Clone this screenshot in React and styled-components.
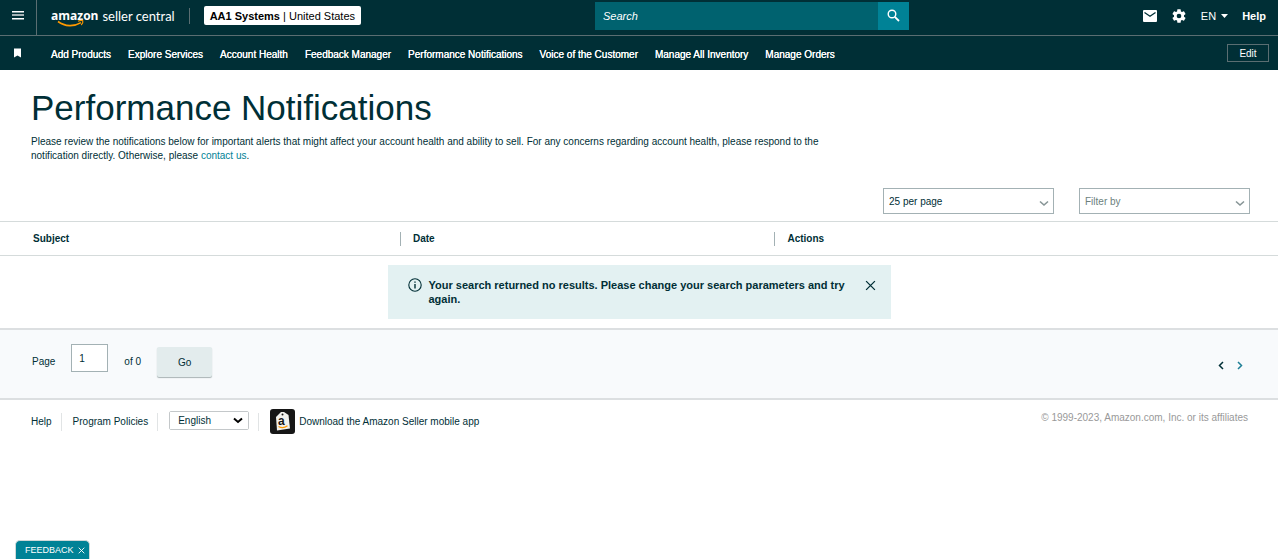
import React, { useState } from "react";
import styled, { createGlobalStyle } from "styled-components";

const GlobalStyle = createGlobalStyle`
  * {
    box-sizing: border-box;
  }
  body {
    margin: 0;
    background: #fff;
    color: #002f36;
    font-family: "Liberation Sans", Arial, sans-serif;
    font-size: 10px;
    line-height: 14px;
  }
  button, input, select {
    font-family: inherit;
    font-size: inherit;
    color: inherit;
  }
  a {
    color: inherit;
    text-decoration: none;
  }
`;

const Header = styled.header`
  background: #002f36;
  color: #fff;
`;

const TopBar = styled.div`
  display: flex;
  height: 36px;
  border-bottom: 1px solid #5a6e72;
`;

const IconButton = styled.button`
  display: flex;
  align-items: center;
  justify-content: center;
  padding: 0;
  border: 0;
  background: none;
  cursor: pointer;
`;

const MenuButton = styled(IconButton)`
  width: 37px;
  padding-bottom: 4px;
  border-right: 1px solid #5a6e72;
`;

const TopContent = styled.div`
  flex: 1;
  display: flex;
  align-items: center;
  justify-content: space-between;
  padding: 0 12px 4px 14px;
`;

const Brand = styled.div`
  display: flex;
  align-items: center;
`;

const Logo = styled.a`
  position: relative;
  display: flex;
  align-items: center;
  gap: 4px;
  height: 16px;
  padding-right: 14px;
  border-right: 1px solid #5a6e72;
  white-space: nowrap;
`;

const LogoName = styled.span`
  font-family: "Open Sans", sans-serif;
  font-size: 12px;
  font-weight: 700;
`;

const LogoProduct = styled.span`
  font-family: Lato, sans-serif;
  font-size: 13px;
`;

const Smile = styled.svg`
  position: absolute;
  left: 6px;
  top: 11px;
`;

const Account = styled.button`
  height: 19px;
  margin-left: 14px;
  padding: 0 6px;
  border: 0;
  border-radius: 2px;
  background: #fff;
  color: #000;
  font-size: 11px;
  white-space: nowrap;
`;

const SearchForm = styled.form`
  display: flex;
  width: 314px;
  height: 28px;
`;

const SearchInput = styled.input`
  flex: 1;
  min-width: 0;
  padding: 0 8px;
  border: 0;
  background: #00626f;
  color: #fff;
  font-size: 11px;
  &::placeholder {
    color: #fff;
    font-style: italic;
    opacity: 1;
  }
`;

const SearchButton = styled(IconButton)`
  width: 31px;
  background: #008296;
`;

const Tools = styled.div`
  display: flex;
  align-items: center;
  gap: 14px;
  font-size: 11px;
`;

const LanguageButton = styled(IconButton)`
  gap: 5px;
  color: #fff;
`;

const HelpLink = styled.a`
  font-weight: 700;
`;

const NavBar = styled.nav`
  display: flex;
  align-items: center;
  height: 34px;
  padding: 0 9px 0 13px;
  color: #fff;
`;

const NavLinks = styled.div`
  flex: 1;
  display: flex;
  gap: 17px;
  margin-left: 29px;
  padding-top: 4px;
  white-space: nowrap;
  text-shadow: 0 0 0 #fff;
`;

const EditButton = styled.button`
  width: 42px;
  height: 18px;
  padding: 0;
  border: 1px solid #5a6e72;
  background: none;
  color: #fff;
`;

const Intro = styled.section`
  padding: 16px 31px 0;
`;

const Title = styled.h1`
  margin: 0;
  font-size: 35px;
  font-weight: 400;
  line-height: 44px;
`;

const Lead = styled.p`
  max-width: 825px;
  margin: 5px 0 0;
`;

const Link = styled.a`
  color: #008296;
`;

const Filters = styled.div`
  display: flex;
  justify-content: flex-end;
  gap: 25px;
  padding: 25px 28px 7px;
`;

const SelectBox = styled.div`
  display: grid;
  align-items: center;
  width: 171px;
  height: 26px;
  border: 1px solid #a3b1b4;
  & > * {
    grid-area: 1 / 1;
  }
  svg {
    justify-self: end;
    margin: 4px 4px 0 0;
    pointer-events: none;
  }
`;

const Select = styled.select`
  appearance: none;
  width: 100%;
  height: 100%;
  padding: 0 5px;
  border: 0;
  background: #fff;
  color: ${(props) => (props.$muted ? "#6c7f7d" : "#002f36")};
`;

const Table = styled.table`
  width: 100%;
  table-layout: fixed;
  border-collapse: collapse;
  border-top: 1px solid #d5dbdb;
`;

const HeadCell = styled.th`
  width: ${(props) => props.$width};
  height: 34px;
  padding: 0;
  border-bottom: 1px solid #d5dbdb;
  text-align: left;
`;

const HeadLabel = styled.div`
  padding-left: ${(props) => (props.$first ? "33px" : "12px")};
  border-left: ${(props) => (props.$first ? "0" : "1px solid #a3b1b4")};
`;

const EmptyCell = styled.td`
  padding: 9px 0;
`;

const Alert = styled.div`
  display: flex;
  align-items: flex-start;
  width: 503px;
  max-width: 100%;
  min-height: 54px;
  margin: 0 auto;
  padding: 13px 15px 13px 20px;
  background: #e3f1f2;
  font-size: 11px;
  font-weight: 700;
`;

const AlertText = styled.div`
  flex: 1;
  padding: 0 12px 0 7px;
`;

const CloseButton = styled(IconButton)`
  height: 14px;
`;

const Pager = styled.form`
  display: flex;
  align-items: center;
  height: 72px;
  padding: 0 35px 4px 32px;
  border-top: 2px solid #dcdfe1;
  border-bottom: 2px solid #dcdfe1;
  background: #f8fafc;
`;

const PageInput = styled.input`
  width: 37px;
  height: 28px;
  margin: 0 16px;
  margin-bottom: 8px;
  padding: 0 7px;
  border: 1px solid #a3b1b4;
  background: #fff;
`;

const PageLabel = styled.label`
  display: flex;
  align-items: center;
`;

const GoButton = styled.button`
  width: 55px;
  height: 30px;
  margin-left: 16px;
  border: 0;
  border-radius: 2px;
  background: #e3eced;
  box-shadow: 0 1px 1px #a9b3b5;
`;

const Arrows = styled.div`
  display: flex;
  gap: 13px;
  margin-top: 6px;
  margin-left: auto;
`;

const Footer = styled.footer`
  display: flex;
  justify-content: space-between;
  padding: 9px 30px 0 31px;
`;

const FooterLinks = styled.div`
  display: flex;
  align-items: center;
`;

const FooterItem = styled.div`
  display: flex;
  align-items: center;
  height: 18px;
  padding-right: 9px;
  margin-right: 11px;
  border-right: 1px solid #e1e4e5;
`;

const LanguageBox = styled(SelectBox)`
  width: 80px;
  height: 19px;
  margin-top: -3px;
  border: 1px solid #c4c8ca;
  border-radius: 2px;
  select {
    padding: 0 8px;
  }
  svg {
    margin: 0 5px 0 0;
  }
`;

const AppLink = styled.a`
  display: flex;
  align-items: center;
  gap: 4px;
`;

const Copyright = styled.div`
  margin-top: 2px;
  color: #999;
`;

const FeedbackTab = styled.div`
  position: fixed;
  left: 15px;
  bottom: 0;
  display: flex;
  align-items: center;
  gap: 4px;
  height: 19px;
  padding: 0 4px 0 9px;
  border: 1px solid #cfd8d8;
  border-bottom: 0;
  border-radius: 5px 5px 0 0;
  background: #008296;
  color: #fff;
  font-size: 9px;
`;

const FeedbackButton = styled.button`
  padding: 0;
  border: 0;
  background: none;
`;

const Cross = ({ size, width }) => (
  <svg width={size} height={size} viewBox="0 0 10 10" fill="none" stroke="currentColor" strokeWidth={width}>
    <path d="M1 1L9 9M9 1L1 9" />
  </svg>
);

const Chevron = ({ color, width }) => (
  <svg width="10" height="7" viewBox="0 0 10 7" fill="none" stroke={color} strokeWidth={width}>
    <path d="M1 1.5L5 5L9 1.5" />
  </svg>
);

const navItems = [
  "Add Products",
  "Explore Services",
  "Account Health",
  "Feedback Manager",
  "Performance Notifications",
  "Voice of the Customer",
  "Manage All Inventory",
  "Manage Orders",
];

const columns = [
  { label: "Subject", width: "31.3%" },
  { label: "Date", width: "29.3%" },
  { label: "Actions", width: "39.4%" },
];

function App() {
  const [showAlert, setShowAlert] = useState(true);
  const [showFeedback, setShowFeedback] = useState(true);
  const [page, setPage] = useState("1");

  return (
    <>
      <GlobalStyle />
      <Header>
        <TopBar>
          <MenuButton aria-label="Menu">
            <svg width="12" height="9" viewBox="0 0 12 9">
              <path d="M0 0h12v1.500H0zM0 7h12v1.500H0z" fill="#fff" />
              <path d="M0 3h12v2H0z" fill="#a3b1b4" />
            </svg>
          </MenuButton>
          <TopContent>
            <Brand>
              <Logo href="#">
                <LogoName>amazon</LogoName>
                <LogoProduct>seller central</LogoProduct>
                <Smile width="28" height="9" viewBox="0 0 28 9" fill="none" stroke="#f90">
                  <path d="M1 2.5C8 7.8 17 7.8 24 3.6" strokeWidth="1.6" />
                  <path d="M21 2.2C23 1.4 25 1.2 25.8 1.8C26.2 3 25.4 4.8 24.2 6" strokeWidth="1.1" />
                </Smile>
              </Logo>
              <Account>
                <b>AA1 Systems</b> | United States
              </Account>
            </Brand>
            <SearchForm onSubmit={(e) => e.preventDefault()}>
              <SearchInput placeholder="Search" aria-label="Search" />
              <SearchButton aria-label="Submit search">
                <svg width="13" height="13" viewBox="0 0 13 13" fill="none" stroke="#fff">
                  <circle cx="5" cy="5" r="3.8" strokeWidth="1.4" />
                  <path d="M7.8 7.8L12 12" strokeWidth="1.8" />
                </svg>
              </SearchButton>
            </SearchForm>
            <Tools>
              <IconButton aria-label="Messages">
                <svg width="14" height="12" viewBox="0 0 14 12">
                  <rect width="14" height="12" rx="1" fill="#fff" />
                  <path d="M1.5 2.5L7 6.2L12.5 2.5" fill="none" stroke="#002f36" strokeWidth="1.3" />
                </svg>
              </IconButton>
              <IconButton aria-label="Settings">
                <svg width="16" height="16" viewBox="0 0 24 24" fill="#fff">
                  <path d="M19.43 12.98c.04-.32.07-.64.07-.98s-.03-.66-.07-.98l2.11-1.65c.19-.15.24-.42.12-.64l-2-3.46c-.12-.22-.39-.3-.61-.22l-2.49 1c-.52-.4-1.08-.73-1.69-.98l-.38-2.65A.49.49 0 0 0 14 2h-4c-.25 0-.46.18-.49.42l-.38 2.65c-.61.25-1.17.59-1.69.98l-2.49-1c-.23-.09-.49 0-.61.22l-2 3.46c-.13.22-.07.49.12.64l2.11 1.65c-.04.32-.07.65-.07.98s.03.66.07.98l-2.11 1.65c-.19.15-.24.42-.12.64l2 3.46c.12.22.39.3.61.22l2.49-1c.52.4 1.08.73 1.69.98l.38 2.65c.03.24.24.42.49.42h4c.25 0 .46-.18.49-.42l.38-2.65c.61-.25 1.17-.59 1.69-.98l2.49 1c.23.09.49 0 .61-.22l2-3.46c.12-.22.07-.49-.12-.64l-2.11-1.65zM12 15.5a3.5 3.5 0 1 1 0-7 3.5 3.5 0 0 1 0 7z" />
                </svg>
              </IconButton>
              <LanguageButton>
                EN
                <svg width="7" height="4" viewBox="0 0 7 4">
                  <path d="M0 0h7L3.5 4z" fill="#fff" />
                </svg>
              </LanguageButton>
              <HelpLink href="#">Help</HelpLink>
            </Tools>
          </TopContent>
        </TopBar>
        <NavBar>
          <IconButton aria-label="Bookmarks">
            <svg width="9" height="10" viewBox="0 0 9 10">
              <path d="M1 0.5h7V9.500L4.500 7.500L1 9.500z" fill="#fff" />
            </svg>
          </IconButton>
          <NavLinks>
            {navItems.map((item) => (
              <a href="#" key={item}>{item}</a>
            ))}
          </NavLinks>
          <EditButton>Edit</EditButton>
        </NavBar>
      </Header>

      <main>
        <Intro>
          <Title>Performance Notifications</Title>
          <Lead>
            Please review the notifications below for important alerts that might affect your account
            health and ability to sell. For any concerns regarding account health, please respond to the
            notification directly. Otherwise, please <Link href="#">contact us</Link>.
          </Lead>
        </Intro>
        <Filters>
          <SelectBox>
            <Select aria-label="Results per page">
              <option>25 per page</option>
            </Select>
            <Chevron color="#879596" width="1.6" />
          </SelectBox>
          <SelectBox>
            <Select aria-label="Filter by" $muted>
              <option>Filter by</option>
            </Select>
            <Chevron color="#879596" width="1.6" />
          </SelectBox>
        </Filters>
        <Table>
          <thead>
            <tr>
              {columns.map((column, index) => (
                <HeadCell key={column.label} $width={column.width}>
                  <HeadLabel $first={index === 0}>{column.label}</HeadLabel>
                </HeadCell>
              ))}
            </tr>
          </thead>
          <tbody>
            <tr>
              <EmptyCell colSpan={3}>
                {showAlert && (
                  <Alert role="status">
                    <svg width="14" height="14" viewBox="0 0 14 14" fill="none" stroke="#002f36">
                      <circle cx="7" cy="7" r="6.200" strokeWidth="1.1" />
                      <path d="M7 6v4.500M7 3.500v1.300" strokeWidth="1.4" />
                    </svg>
                    <AlertText>
                      Your search returned no results. Please change your search parameters and try again.
                    </AlertText>
                    <CloseButton aria-label="Dismiss" onClick={() => setShowAlert(false)}>
                      <Cross size={11} width={1.2} />
                    </CloseButton>
                  </Alert>
                )}
              </EmptyCell>
            </tr>
          </tbody>
        </Table>
        <Pager onSubmit={(e) => e.preventDefault()}>
          <PageLabel>
            Page
            <PageInput value={page} onChange={(e) => setPage(e.target.value)} />
          </PageLabel>
          <span>of 0</span>
          <GoButton>Go</GoButton>
          <Arrows>
            <IconButton type="button" aria-label="Previous page">
              <svg width="6" height="9" viewBox="0 0 6 9" fill="none" stroke="#002f36" strokeWidth="1.5">
                <path d="M5 1L1.500 4.500L5 8" />
              </svg>
            </IconButton>
            <IconButton type="button" aria-label="Next page">
              <svg width="6" height="9" viewBox="0 0 6 9" fill="none" stroke="#1f7f96" strokeWidth="1.5">
                <path d="M1 1L4.500 4.500L1 8" />
              </svg>
            </IconButton>
          </Arrows>
        </Pager>
      </main>

      <Footer>
        <FooterLinks>
          <FooterItem>
            <a href="#">Help</a>
          </FooterItem>
          <FooterItem>
            <a href="#">Program Policies</a>
          </FooterItem>
          <FooterItem>
            <LanguageBox>
              <Select aria-label="Language">
                <option>English</option>
              </Select>
              <Chevron color="#000" width="2" />
            </LanguageBox>
          </FooterItem>
          <AppLink href="#">
            <svg width="25" height="25" viewBox="0 0 25 25">
              <rect width="25" height="25" rx="3" fill="#161616" />
              <path d="M7.500 6.500L11 3h3l4.500 3L20 19.500L7 21.500L6 8z" fill="#f2f2ee" />
              <circle cx="12.500" cy="5.500" r="1" fill="#161616" />
              <text x="8" y="16" fontFamily="Liberation Sans" fontWeight="700" fontSize="12" fill="#161616">a</text>
              <path d="M8.500 17.500Q13 20 17.500 16.800" fill="none" stroke="#f90" strokeWidth="1.2" />
            </svg>
            Download the Amazon Seller mobile app
          </AppLink>
        </FooterLinks>
        <Copyright>© 1999-2023, Amazon.com, Inc. or its affiliates</Copyright>
      </Footer>

      {showFeedback && (
        <FeedbackTab>
          <FeedbackButton>FEEDBACK</FeedbackButton>
          <IconButton aria-label="Close feedback" onClick={() => setShowFeedback(false)}>
            <Cross size={7} width={1.3} />
          </IconButton>
        </FeedbackTab>
      )}
    </>
  );
}

export default App;
